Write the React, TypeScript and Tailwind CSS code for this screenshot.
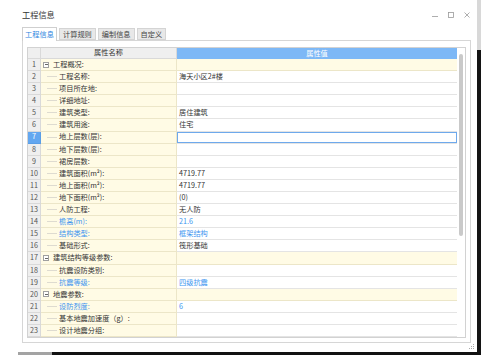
import React from 'react';

type Row = {
  n: number;
  name: string;
  value?: string;
  group?: boolean;
  blue?: boolean;
  last?: boolean;
};

const rows: Row[] = [
  { n: 1, name: '工程概况:', group: true },
  { n: 2, name: '工程名称:', value: '海天小区2#楼' },
  { n: 3, name: '项目所在地:' },
  { n: 4, name: '详细地址:' },
  { n: 5, name: '建筑类型:', value: '居住建筑' },
  { n: 6, name: '建筑用途:', value: '住宅' },
  { n: 7, name: '地上层数(层):' },
  { n: 8, name: '地下层数(层):' },
  { n: 9, name: '裙房层数:' },
  { n: 10, name: '建筑面积(m²):', value: '4719.77' },
  { n: 11, name: '地上面积(m²):', value: '4719.77' },
  { n: 12, name: '地下面积(m²):', value: '(0)' },
  { n: 13, name: '人防工程:', value: '无人防' },
  { n: 14, name: '檐高(m):', value: '21.6', blue: true },
  { n: 15, name: '结构类型:', value: '框架结构', blue: true },
  { n: 16, name: '基础形式:', value: '筏形基础', last: true },
  { n: 17, name: '建筑结构等级参数:', group: true },
  { n: 18, name: '抗震设防类别:' },
  { n: 19, name: '抗震等级:', value: '四级抗震', blue: true, last: true },
  { n: 20, name: '地震参数:', group: true },
  { n: 21, name: '设防烈度:', value: '6', blue: true },
  { n: 22, name: '基本地震加速度（g）:' },
  { n: 23, name: '设计地震分组:', last: true },
];

const SELECTED = 7;

function TitleBar() {
  return (
    <div className="h-[27px] flex items-center justify-between pl-[22px] pr-[6px]">
      <span className="text-[8.2px] text-[#333] pt-[2px]">工程信息</span>
      <div className="flex items-center gap-[8px] pt-[2px]">
        <svg width="8" height="8" viewBox="0 0 8 8">
          <path d="M1 5.5H7" stroke="#999" strokeWidth="0.8" />
        </svg>
        <svg width="8" height="8" viewBox="0 0 8 8">
          <rect x="1.5" y="1.5" width="5" height="5" fill="none" stroke="#999" strokeWidth="0.8" />
        </svg>
        <svg width="8" height="8" viewBox="0 0 8 8">
          <path d="M1.5 1.5L6.5 6.5M6.5 1.5L1.5 6.5" stroke="#999" strokeWidth="0.8" />
        </svg>
      </div>
    </div>
  );
}

function Tabs() {
  const tabs = ['计算规则', '编制信息', '自定义'];
  return (
    <div className="h-[14px] flex items-end pl-[22px] gap-[2px] relative z-10">
      <div className="h-[14px] w-[35px] flex items-center justify-center bg-white border border-b-0 border-[#cfcfcf] text-[7.2px] text-[#2f86e0]">
        工程信息
      </div>
      {tabs.map((t) => (
        <div
          key={t}
          className="h-[12px] px-[3px] flex items-center justify-center bg-[#e8e8e8] border border-[#d4d4d4] text-[7.2px] text-[#444] mb-[1px]"
        >
          {t}
        </div>
      ))}
    </div>
  );
}

function NameCell({ row }: { row: Row }) {
  const color = row.blue ? 'text-[#3d95f0]' : 'text-[#333]';
  if (row.group) {
    return (
      <div className="flex items-center h-full pl-[2px] gap-[4px]">
        <div className="w-[6px] h-[6px] border border-[#a0a0a0] bg-white flex items-center justify-center">
          <div className="w-[3px] h-[1px] bg-[#666]" />
        </div>
        <span className={color}>{row.name}</span>
      </div>
    );
  }
  return (
    <div className="flex items-center h-full pl-[6px] gap-[2px]">
      <div className="w-[10px] h-full flex items-center">
        <div className="w-full h-px bg-[#dedbd0]" />
      </div>
      <span className={color}>{row.name}</span>
    </div>
  );
}

function GridRow({ row }: { row: Row }) {
  const selected = row.n === SELECTED;
  return (
    <div className="flex h-[12.13px] leading-none">
      <div
        className={
          selected
            ? 'w-[13px] flex items-center justify-center bg-[#63a7f0] text-white border-r border-b border-[#5a9ee6]'
            : 'w-[13px] flex items-center justify-center bg-[#efefef] text-[#555] border-r border-b border-[#d9d9d9]'
        }
      >
        {row.n}
      </div>
      <div className="w-[136px] bg-[#fffbe5] border-r border-b border-[#ece6c8]">
        <NameCell row={row} />
      </div>
      <div
        className={`flex-1 border-b ${
          row.group ? 'bg-[#fffbe5] border-[#ece6c8]' : 'bg-white border-[#e4e4e4]'
        }`}
      >
        {selected ? (
          <div className="h-full border border-[#6ea9ec]" />
        ) : (
          <div
            className={`h-full flex items-center pl-[2px] ${
              row.blue ? 'text-[#3d95f0]' : 'text-[#333]'
            }`}
          >
            {row.value}
          </div>
        )}
      </div>
    </div>
  );
}

function Grid() {
  return (
    <div className="w-[439px] h-[291px] border border-[#d2d2d2] flex bg-white">
      <div className="w-[429px] flex flex-col text-[7.2px]">
        <div className="flex h-[11px] leading-none">
          <div className="w-[13px] bg-[#efefef] border-r border-b border-[#d9d9d9]" />
          <div className="w-[136px] bg-[#efefef] border-r border-b border-[#d9d9d9] flex items-center justify-center text-[#333]">
            属性名称
          </div>
          <div className="flex-1 bg-[#7db8f6] flex items-center justify-center text-white">属性值</div>
        </div>
        {rows.map((r) => (
          <GridRow key={r.n} row={r} />
        ))}
      </div>
      <div className="flex-1 flex justify-center pt-[6px]">
        <div className="w-[4px] h-[182px] rounded-full bg-[#c9c9c9]" />
      </div>
    </div>
  );
}

export default function App() {
  return (
    <div className="w-[493px] h-[359px] bg-white overflow-hidden font-['Noto_Sans_CJK_SC',sans-serif]">
      <div className="flex">
        <div className="w-[477px] h-[352px] flex flex-col bg-white">
          <TitleBar />
          <Tabs />
          <div className="ml-[22px] -mt-px w-[449px] h-[303px] border border-[#d6d6d6] pl-[4px] pt-[6px]">
            <Grid />
          </div>
          <div className="flex justify-end pr-[2px] pt-[1px]">
            <svg width="6" height="6" viewBox="0 0 6 6">
              <rect x="4" y="0" width="1" height="1" fill="#aaa" />
              <rect x="2" y="2" width="1" height="1" fill="#aaa" />
              <rect x="4" y="2" width="1" height="1" fill="#aaa" />
              <rect x="0" y="4" width="1" height="1" fill="#aaa" />
              <rect x="2" y="4" width="1" height="1" fill="#aaa" />
              <rect x="4" y="4" width="1" height="1" fill="#aaa" />
            </svg>
          </div>
        </div>
        <div className="w-[4px] flex flex-col">
          <div className="h-[50px] bg-[#d8d8d8]" />
          <div className="flex-1 bg-[#141414]" />
        </div>
      </div>
      <div className="flex h-[3px] ml-[18px] w-[463px]">
        <div className="w-[34px] bg-[#a3a3a3]" />
        <div className="flex-1 bg-[#111]" />
      </div>
    </div>
  );
}
